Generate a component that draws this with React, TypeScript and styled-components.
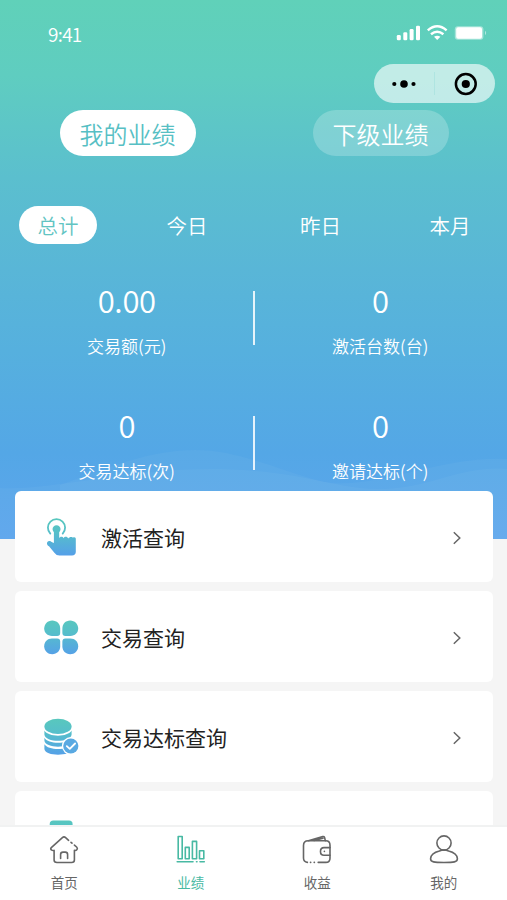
import React from 'react';
import styled, { createGlobalStyle } from 'styled-components';

const GlobalStyle = createGlobalStyle`
  * { box-sizing: border-box; }
  body {
    margin: 0;
    background: #f5f5f5;
    font-family: "Noto Sans CJK SC", "Noto Sans", sans-serif;
  }
  svg { display: block; }
`;

const Screen = styled.div`
  display: flex;
  flex-direction: column;
  width: 507px;
  height: 900px;
  overflow: hidden;
  background: #f5f5f5;
`;

const Content = styled.main`
  flex: 1;
  min-height: 0;
  overflow: hidden;
`;

const Hero = styled.header`
  position: relative;
  height: 539px;
  background: linear-gradient(
    180deg,
    #60d1b9 0%,
    #5fcdc0 14%,
    #5bbfce 33%,
    #59b6d7 50%,
    #56b0de 65%,
    #54a7e6 84%,
    #5da5ed 100%
  );
`;

const Waves = styled.svg`
  position: absolute;
  left: 0;
  bottom: 0;
`;

const HeroBody = styled.div`
  position: relative;
`;

const StatusBar = styled.div`
  display: flex;
  align-items: center;
  justify-content: space-between;
  height: 64px;
  padding: 4px 19px 0 48px;
  color: #fff;
`;

const Clock = styled.span`
  font-size: 19px;
  font-weight: 350;
  line-height: 24px;
  letter-spacing: -0.7px;
`;

const StatusIcons = styled.svg`
  margin-top: -5px;
`;

const CapsuleRow = styled.div`
  display: flex;
  justify-content: flex-end;
  padding-right: 12px;
`;

const Capsule = styled.div`
  display: grid;
  grid-template-columns: 60px 1px 60px;
  align-items: center;
  justify-items: center;
  width: 121px;
  height: 39px;
  border-radius: 20px;
  background: rgba(255, 255, 255, 0.62);
`;

const CapsuleDivider = styled.span`
  width: 1px;
  height: 23px;
  background: rgba(80, 190, 195, 0.16);
`;

const Scopes = styled.div`
  display: grid;
  grid-template-columns: 1fr 1fr;
  justify-items: center;
  margin-top: 7px;
  padding-left: 1px;
`;

const ScopeButton = styled.button<{ $active?: boolean }>`
  width: 136px;
  height: 46px;
  padding: 1px 0 0;
  border: 0;
  border-radius: 23px;
  font: inherit;
  font-size: 24px;
  font-weight: 350;
  line-height: 45px;
  color: ${(p) => (p.$active ? '#57bfc4' : '#fff')};
  background: ${(p) => (p.$active ? '#fff' : 'rgba(255, 255, 255, 0.22)')};
`;

const Periods = styled.div`
  display: grid;
  grid-template-columns: 116px 142px 125px 134px;
  justify-items: center;
  margin-top: 50px;
`;

const PeriodButton = styled.button<{ $active?: boolean }>`
  width: 78px;
  height: 38px;
  padding: 1px 0 0;
  border: 0;
  border-radius: 19px;
  font: inherit;
  font-size: 20.5px;
  font-weight: 350;
  line-height: 37px;
  color: ${(p) => (p.$active ? '#62c4c2' : '#fff')};
  background: ${(p) => (p.$active ? '#fff' : 'transparent')};
`;

const Stats = styled.div`
  display: grid;
  grid-template-columns: 1fr 1fr;
  row-gap: 45px;
  margin-top: 37px;
`;

const Stat = styled.div`
  position: relative;
  display: flex;
  flex-direction: column;
  align-items: center;
  height: 80px;
  color: #fff;

  &:nth-child(odd)::after {
    content: '';
    position: absolute;
    right: -1px;
    top: 10px;
    width: 1.5px;
    height: 54px;
    background: rgba(255, 255, 255, 0.85);
  }
`;

const StatValue = styled.span`
  margin-top: -1px;
  font-size: 31px;
  font-weight: 350;
  line-height: 40px;
  letter-spacing: -0.3px;
`;

const StatLabel = styled.span`
  margin-top: 14px;
  font-size: 17px;
  font-weight: 350;
  line-height: 24px;
`;

const MenuList = styled.section`
  position: relative;
  display: flex;
  flex-direction: column;
  gap: 9px;
  margin-top: -48px;
  padding: 0 14px 0 15px;
`;

const MenuCard = styled.div`
  display: grid;
  grid-template-columns: 40px 1fr 12px;
  column-gap: 20px;
  align-items: center;
  flex: none;
  height: 91px;
  padding: 3px 30px 0 26px;
  border-radius: 6px;
  background: #fff;
`;

const MenuTitle = styled.span`
  margin-top: -3px;
  font-size: 21px;
  line-height: 30px;
  color: #222;
`;

const TabBar = styled.nav`
  display: grid;
  grid-template-columns: repeat(4, 1fr);
  flex: none;
  height: 75.5px;
  padding-left: 1px;
  border-top: 2px solid #f1f2f2;
  background: #fff;
`;

const Tab = styled.a<{ $active?: boolean }>`
  display: flex;
  flex-direction: column;
  align-items: center;
  padding-top: 7px;
  font-size: 13.5px;
  line-height: 20px;
  color: ${(p) => (p.$active ? '#48b9a3' : '#666')};
`;

const TabLabel = styled.span`
  margin-top: 6px;
`;

const Gradient = ({ id }: { id: string }) => (
  <defs>
    <linearGradient id={id} gradientUnits="userSpaceOnUse" x1="0" y1="2" x2="0" y2="38">
      <stop offset="0" stopColor="#58c7be" />
      <stop offset="0.35" stopColor="#56bfca" />
      <stop offset="1" stopColor="#559fe9" />
    </linearGradient>
  </defs>
);

const TapIcon = () => (
  <svg width="40" height="40" viewBox="0 0 40 40">
    <Gradient id="tap" />
    <path
      d="M9.3 15.6 A8.6 8.6 0 1 1 21.7 15.6"
      fill="none"
      stroke="url(#tap)"
      strokeWidth="1.8"
      strokeLinecap="round"
    />
    <path
      d="M12.9 14.2 A4 4 0 1 1 18.2 14.2 V20.2 C18.7 18.4 21.6 18 22.6 20.2 C23.4 18.2 26.4 18.2 27.2 20.4 C28.2 19 30.4 18.4 31.6 19.4 Q34.4 18.6 34.8 20.6 V34 Q34.6 37.4 31 37.6 H18.4 Q15.4 37.6 13.6 35 L8 28.3 C5.2 26.8 5.4 23.4 8.2 23 Q9.6 22.8 10.6 24 L12.9 25 Z"
      fill="url(#tap)"
    />
  </svg>
);

const CloverIcon = () => (
  <svg width="40" height="40" viewBox="0 0 40 40">
    <Gradient id="clover" />
    <g fill="url(#clover)">
      <path d="M11.2 2.6 C16 2.6 19.2 6.2 19.2 10.4 V15 Q19.2 18 16.2 18 H11 C6.4 18 3.2 14.8 3.2 10.6 C3.2 6.2 6.8 2.6 11.2 2.6 Z" />
      <path d="M29.2 2.6 C24.4 2.6 21.4 6.2 21.4 10.4 V15 Q21.4 18 24.4 18 H29.4 C34 18 37.2 14.8 37.2 10.6 C37.2 6.2 33.6 2.6 29.2 2.6 Z" />
      <path d="M11.2 36.2 C16 36.2 19.2 32.8 19.2 28.6 V23.6 Q19.2 20.6 16.2 20.6 H11 C6.4 20.6 3.2 24 3.2 28.2 C3.2 32.8 6.8 36.2 11.2 36.2 Z" />
      <path d="M29.2 36.2 C24.4 36.2 21.4 32.8 21.4 28.6 V23.6 Q21.4 20.6 24.4 20.6 H29.4 C34 20.6 37.2 24 37.2 28.2 C37.2 32.8 33.6 36.2 29.2 36.2 Z" />
    </g>
  </svg>
);

const CoinsIcon = () => (
  <svg width="40" height="40" viewBox="0 0 40 40">
    <Gradient id="coins" />
    <g fill="url(#coins)">
      <ellipse cx="17" cy="8.4" rx="13.6" ry="7.7" />
      <path d="M3.4 12.6 C7 19.4 27 19.4 30.6 12.6 V16.4 C30 24.8 4 24.8 3.4 16.4 Z" />
      <path d="M3.4 19.8 C7 26.4 27 26.4 30.6 19.8 V22.6 C30 30.8 4 30.8 3.4 22.6 Z" />
      <path d="M3.4 26.3 C7 32.6 27 32.6 30.6 26.3 V31 C30 38.6 4 38.6 3.4 31 Z" />
    </g>
    <circle cx="29.8" cy="28" r="8.9" fill="#fff" />
    <circle cx="29.8" cy="28" r="7.6" fill="#59a9e2" />
    <path
      d="M25.8 28.1 L28.8 30.9 L34.1 25.5"
      fill="none"
      stroke="#fff"
      strokeWidth="1.8"
      strokeLinecap="round"
      strokeLinejoin="round"
    />
  </svg>
);

const DocumentIcon = () => (
  <svg width="40" height="40" viewBox="0 0 40 40">
    <Gradient id="document" />
    <path d="M8.7 6 Q8.7 2.4 12.3 2.4 H28 Q31.6 2.4 31.6 6 V34 Q31.6 37 28 37 H12 Q8.7 37 8.7 34 Z" fill="url(#document)" />
  </svg>
);

const Chevron = () => (
  <svg width="12" height="16" viewBox="0 0 12 16">
    <path d="M2.8 2.2 L8.8 8 L2.8 13.8" fill="none" stroke="#666" strokeWidth="1.5" />
  </svg>
);

const LineIcon = styled.svg.attrs({ width: 30, height: 32, viewBox: '0 0 30 32' })`
  fill: none;
  stroke: currentColor;
  stroke-width: 1.6;
  stroke-linecap: round;
  stroke-linejoin: round;
`;

const HomeIcon = () => (
  <LineIcon>
    <path d="M19.6 6.3 L16.6 3.6 Q15 2.2 13.4 3.6 L2.3 13.6 Q1 15 2.6 16 Q3.6 16.8 5.1 16.4 V26 Q5.1 28.5 8 28.5 H22.6 Q25.4 28.5 25.4 26 V16.4 Q27 16.8 28 15.6 Q28.9 14.3 27.6 13 L25.4 11.1 M22 8.3 L23 9.2" />
    <path d="M11.6 24.4 V20.4 Q11.6 18.1 14 18.1 H16.3 Q18.6 18.1 18.6 20.4 V24.4" />
  </LineIcon>
);

const ChartIcon = () => (
  <LineIcon>
    <path d="M2.2 2.5 H6.2 V24.8 H2.2 Z M9.3 13.4 H13.2 V24.8 H9.3 Z M16.4 7.4 H20.6 V24.8 H16.4 Z M23.5 16.8 H27.8 V24.8 H23.5 Z" />
    <path d="M1.2 27.8 H17 M20.5 27.8 H21 M24 27.8 H28.3" />
  </LineIcon>
);

const WalletIcon = () => (
  <LineIcon>
    <path d="M5.4 28.4 Q1.5 27.8 1.5 24 V11.5 Q1.5 6.8 6.2 6.8 H23.8 Q28 6.8 28 11.2 V24.2 Q28 28.4 23.8 28.4 H16.2 M8.5 28.4 H8.7 M12.2 28.4 H12.4" />
    <path d="M6.4 6.7 L20.8 2.6 Q22.3 2.2 22.7 3.9 L23.3 6.7 M12 6.4 L21 4.2" />
    <path d="M28 13.6 H22 C17.3 13.6 17.3 21.2 22 21.2 H28 M22.4 17.3 V17.5" />
  </LineIcon>
);

const UserIcon = () => (
  <LineIcon>
    <circle cx="15" cy="9" r="7.1" />
    <path d="M10.4 17 Q15 14.9 19.6 17 C24.8 18.3 28.2 21.2 28.4 24.6 C28.6 28.2 24.6 28.5 15 28.5 C5.4 28.5 1.3 28.2 1.6 24.6 C1.8 21.2 5.2 18.3 10.4 17 Z" />
  </LineIcon>
);

const stats = [
  { value: '0.00', label: '交易额(元)' },
  { value: '0', label: '激活台数(台)' },
  { value: '0', label: '交易达标(次)' },
  { value: '0', label: '邀请达标(个)' },
];

const menu = [
  { title: '激活查询', Icon: TapIcon },
  { title: '交易查询', Icon: CloverIcon },
  { title: '交易达标查询', Icon: CoinsIcon },
  { title: '', Icon: DocumentIcon },
];

const tabs = [
  { label: '首页', Icon: HomeIcon },
  { label: '业绩', Icon: ChartIcon, active: true },
  { label: '收益', Icon: WalletIcon },
  { label: '我的', Icon: UserIcon },
];

export default function App() {
  return (
    <Screen>
      <GlobalStyle />
      <Content>
        <Hero>
          <Waves width="507" height="100" viewBox="0 0 507 100">
            <g fill="#fff" fillOpacity="0.035">
              <path d="M60 46 C110 28 150 11 195 11 C240 11 280 32 320 42 C370 54 440 16 507 20 V100 H60 Z" />
              <path d="M0 49 C60 52 150 22 255 32 C310 36 340 50 380 50 C430 50 460 26 507 30 V100 H0 Z" />
            </g>
          </Waves>
          <HeroBody>
            <StatusBar>
              <Clock>9:41</Clock>
              <StatusIcons width="92" height="20" viewBox="0 0 92 20" fill="#fff">
                <rect x="0.8" y="13" width="4" height="5.2" rx="1.3" />
                <rect x="7.3" y="10.3" width="4" height="7.9" rx="1.3" />
                <rect x="13.6" y="7" width="4" height="11.2" rx="1.3" />
                <rect x="20" y="3.7" width="4" height="14.5" rx="1.3" />
                <g fill="none" stroke="#fff" strokeWidth="2.5">
                  <path d="M31.8 8.4 Q41.2 0.2 50.6 8.4" />
                  <path d="M35 12.2 Q41.2 7.2 47.4 12.2" />
                </g>
                <path d="M38 14.7 Q41.2 12.6 44.4 14.7 L41.2 17.9 Z" />
                <rect x="58.8" y="4.2" width="28.6" height="13.6" rx="3" fillOpacity="0.45" />
                <rect x="60.2" y="5.2" width="25.8" height="11.6" rx="2" />
                <path d="M89 8.8 Q91.3 11 89 13.2 Z" fillOpacity="0.5" />
              </StatusIcons>
            </StatusBar>
            <CapsuleRow>
              <Capsule>
                <svg width="26" height="10" viewBox="0 0 26 10">
                  <circle cx="3.3" cy="5" r="2.1" />
                  <circle cx="13" cy="5" r="3.8" />
                  <circle cx="22.5" cy="5" r="2.1" />
                </svg>
                <CapsuleDivider />
                <svg width="24" height="24" viewBox="0 0 24 24">
                  <circle cx="12.8" cy="12" r="9.9" fill="none" stroke="#000" strokeWidth="2.5" />
                  <circle cx="12.8" cy="12" r="4.1" />
                </svg>
              </Capsule>
            </CapsuleRow>
            <Scopes>
              <ScopeButton $active>我的业绩</ScopeButton>
              <ScopeButton>下级业绩</ScopeButton>
            </Scopes>
            <Periods>
              <PeriodButton $active>总计</PeriodButton>
              <PeriodButton>今日</PeriodButton>
              <PeriodButton>昨日</PeriodButton>
              <PeriodButton>本月</PeriodButton>
            </Periods>
            <Stats>
              {stats.map((s) => (
                <Stat key={s.label}>
                  <StatValue>{s.value}</StatValue>
                  <StatLabel>{s.label}</StatLabel>
                </Stat>
              ))}
            </Stats>
          </HeroBody>
        </Hero>
        <MenuList>
          {menu.map(({ title, Icon }, i) => (
            <MenuCard key={i}>
              <Icon />
              <MenuTitle>{title}</MenuTitle>
              <Chevron />
            </MenuCard>
          ))}
        </MenuList>
      </Content>
      <TabBar>
        {tabs.map(({ label, Icon, active }) => (
          <Tab key={label} $active={active}>
            <Icon />
            <TabLabel>{label}</TabLabel>
          </Tab>
        ))}
      </TabBar>
    </Screen>
  );
}
